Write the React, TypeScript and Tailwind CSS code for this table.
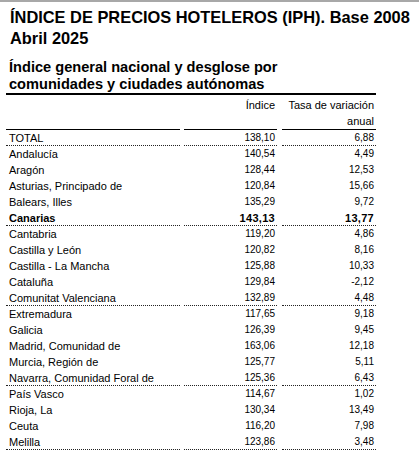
import React from 'react';

type Row = {
  name: string;
  index: string;
  rate: string;
  bold?: boolean;
  // dotted separator under the row
  sep?: boolean;
};

const rows: Row[] = [
  { name: 'TOTAL', index: '138,10', rate: '6,88', sep: true },
  { name: 'Andalucía', index: '140,54', rate: '4,49' },
  { name: 'Aragón', index: '128,44', rate: '12,53' },
  { name: 'Asturias, Principado de', index: '120,84', rate: '15,66' },
  { name: 'Balears, Illes', index: '135,29', rate: '9,72' },
  { name: 'Canarias', index: '143,13', rate: '13,77', bold: true, sep: true },
  { name: 'Cantabria', index: '119,20', rate: '4,86' },
  { name: 'Castilla y León', index: '120,82', rate: '8,16' },
  { name: 'Castilla - La Mancha', index: '125,88', rate: '10,33' },
  { name: 'Cataluña', index: '129,84', rate: '-2,12' },
  { name: 'Comunitat Valenciana', index: '132,89', rate: '4,48', sep: true },
  { name: 'Extremadura', index: '117,65', rate: '9,18' },
  { name: 'Galicia', index: '126,39', rate: '9,45' },
  { name: 'Madrid, Comunidad de', index: '163,06', rate: '12,18' },
  { name: 'Murcia, Región de', index: '125,77', rate: '5,11' },
  { name: 'Navarra, Comunidad Foral de', index: '125,36', rate: '6,43', sep: true },
  { name: 'País Vasco', index: '114,67', rate: '1,02' },
  { name: 'Rioja, La', index: '130,34', rate: '13,49' },
  { name: 'Ceuta', index: '116,20', rate: '7,98' },
  { name: 'Melilla', index: '123,86', rate: '3,48', sep: true },
];

const TableRow: React.FC<{ row: Row }> = ({ row }) => {
  const sep = row.sep ? 'border-b border-dotted border-[#222]' : '';
  const num = row.bold
    ? 'text-[11px] font-bold tracking-[0.3px]'
    : 'text-[10px]';
  return (
    <div className="flex h-[16px] leading-[16px] text-black">
      <div
        className={`box-border h-[16px] w-[174px] pl-[3px] text-[11px] ${
          row.bold ? 'font-bold' : ''
        } ${sep}`}
      >
        {row.name}
      </div>
      <div className={`ml-[4px] box-border h-[16px] w-[93px] pr-[2px] text-right ${num} ${sep}`}>
        {row.index}
      </div>
      <div className={`ml-[5px] box-border h-[16px] w-[94px] pr-[2px] text-right ${num} ${sep}`}>
        {row.rate}
      </div>
    </div>
  );
};

export default function App() {
  return (
    <div className="box-border h-[455px] w-[419px] overflow-hidden border-t-2 border-[#a8a8a8] bg-white font-['Liberation_Sans',Arial,sans-serif] text-black">
      <div className="pl-[10px] pt-[5px] text-[16.4px] font-bold leading-[21px]">
        <div>ÍNDICE DE PRECIOS HOTELEROS (IPH). Base 2008</div>
        <div>Abril 2025</div>
      </div>

      <div className="mt-[10px] pl-[9px] text-[14.6px] font-bold leading-[17px]">
        <div>Índice general nacional y desglose por</div>
        <div>comunidades y ciudades autónomas</div>
      </div>

      <div className="ml-[6px] w-[370px] border-t-2 border-black">
        {/* header */}
        <div className="flex text-[11px] leading-[16px]">
          <div className="box-border h-[35px] w-[174px] border-b border-black" />
          <div className="ml-[4px] box-border h-[35px] w-[93px] border-b border-black pr-[2px] pt-[2px] text-right">
            Índice
          </div>
          <div className="ml-[5px] box-border h-[35px] w-[94px] border-b border-black pr-[2px] pt-[2px] text-right">
            <div>Tasa de variación</div>
            <div>anual</div>
          </div>
        </div>

        {rows.map((r) => (
          <TableRow key={r.name} row={r} />
        ))}
      </div>
    </div>
  );
}
